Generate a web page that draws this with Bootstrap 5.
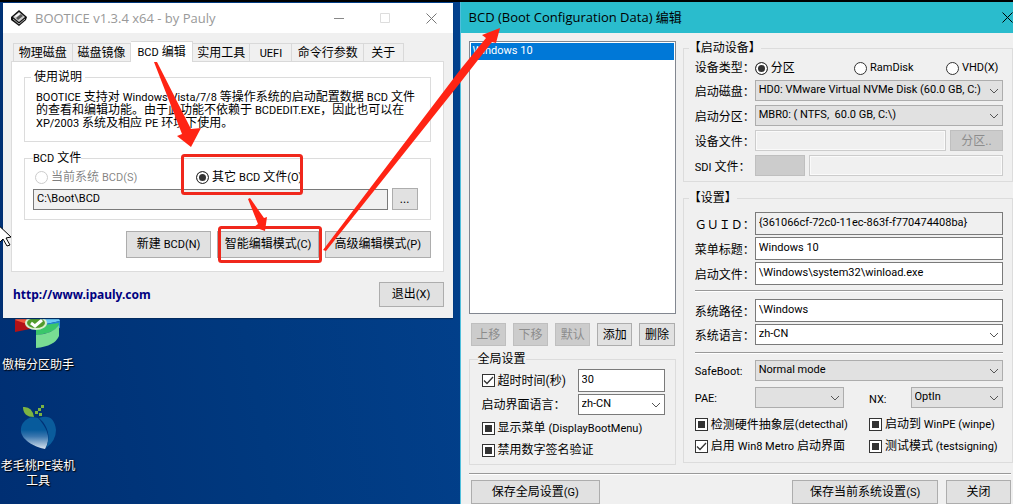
<!DOCTYPE html>
<html lang="zh-CN">
<head>
<meta charset="utf-8">
<meta name="viewport" content="width=device-width, initial-scale=1">
<title>BOOTICE</title>
<link href="https://cdn.jsdelivr.net/npm/bootstrap@5.3.0/dist/css/bootstrap.min.css" rel="stylesheet">
<style>
body{font:12px/16px Roboto,"Noto Sans CJK SC",sans-serif;color:#000;background:linear-gradient(80deg,#002f73,#00397f 25%,#034493 60%);border-top:2px solid #000;min-height:100vh;overflow:hidden}
.lat{font-size:11px}
.desktop-side{flex:460 1 0;min-width:0}
.tool-window{background:#f0f0f0;margin:1px 7px 0 3px;z-index:2;box-shadow:0 1px 1px #012b60}
.bcd-window{flex:553 1 0;min-width:0;background:#f0f0f0;border-left:1px solid #4fbfdc;height:calc(100vh - 2px)}
.title-bar{height:31px;font:13px/31px "Open Sans","Noto Sans CJK SC",sans-serif}
.title-light{background:#fff;color:#999;height:30px;line-height:30px}
.title-cyan{background:#2abccd}
.caption-btn{border:0;background:none;padding:0;display:flex}
.tab-strip{height:20px;margin:8px 10px 0}
.tabs-inner{width:91%}
.tab-strip button{border:1px solid #d9d9d9;border-left-width:0;background:#f0f0f0;color:#000;height:19px;padding:1px 0 0;flex:1 1 0;min-width:0;white-space:nowrap;line-height:17px}
.tab-strip button:first-child{border-left-width:1px}
.tab-strip .current{background:#fff;height:21px;border-bottom:0}
.tab-body{background:#fff;border:1px solid #dcdcdc;margin:0 9px 0 8px;padding:7px 12px 13px}
.intro{line-height:13px;padding:6px 0 0 11px;margin:0 0 3px;white-space:nowrap}
fieldset{border:1px solid #dcdcdc}
legend{font-size:12px;line-height:16px;margin:0 0 0 6px;padding:0 3px}
.source-row{padding:2px 0 2px 2px}
.group-file{padding:0 8px 9px}
.action-row{gap:6px;padding-top:11px}
.win-btn{border:1px solid #adadad;background:#e1e1e1;color:#000;font-size:12px;line-height:16px;padding:0 2px;height:27px;white-space:nowrap}
.win-btn:disabled{background:#ccc;border-color:#bfbfbf;color:#8c8c8c}
.btn-dots{height:22px;flex:0 0 26px}
.btn-exit{height:25px;width:65px}
.btn-part{height:21px;flex:0 0 53px}
.btn-sdi{height:21px;flex:0 0 50px}
.btn-save{height:24px}
.win-input,.win-select{border:1px solid #7a7a7a;background-color:#fff;height:23px;padding:0 3px 2px;font-size:11px;line-height:16px;color:#000;border-radius:0;min-width:0;width:100%;display:block}
.win-input[readonly]{background:#f0f0f0}
.win-input:disabled{border-color:#ccc;background:#f0f0f0;box-shadow:inset 0 0 0 1px #fafafa}
.win-select{height:21px;appearance:none;background-image:url("data:image/svg+xml,%3Csvg xmlns='http://www.w3.org/2000/svg' width='10' height='6'%3E%3Cpath d='M1 1l4 4 4-4' fill='none' stroke='%23555'/%3E%3C/svg%3E");background-repeat:no-repeat;background-position:right 3px center}
.select-grey{background-color:#e1e1e1;border-color:#adadad}
.tick{appearance:none;width:13px;height:13px;border:1px solid #333;background:#fff;margin:0 3px 0 0;flex:none}
.tick:checked{background:#fff url("data:image/svg+xml,%3Csvg xmlns='http://www.w3.org/2000/svg' width='11' height='11'%3E%3Cpath d='M1 5.5l3 3 6-6.500' fill='none' stroke='%23333' stroke-width='1.300'/%3E%3C/svg%3E")}
.tick:indeterminate{background:#333;box-shadow:inset 0 0 0 2px #fff}
.dot{appearance:none;width:13px;height:13px;border:1px solid #333;border-radius:50%;background:#fff;margin:0 3px 0 0;flex:none}
.dot:checked{background:#333;box-shadow:inset 0 0 0 2px #fff}
.dot:disabled{border-color:#ccc}
label{white-space:nowrap}
.win-input.file-input{height:21px}
.site-link{font:bold 12px/16px "Noto Sans",sans-serif;color:#000080;text-decoration:none}
.window-foot{padding:10px 9px 11px 10px}
.panes{padding:8px 0 0 8px;gap:7px}
.pane-list{flex:207 1 0;min-width:0}
.pane-form{flex:330 1 0;min-width:0}
.boot-list{border:1px solid #828790;background:#fff;padding:1px;height:273px;overflow:hidden;font-size:11px}
.boot-list div{background:#0078d7;color:#fff;height:17px;padding-left:2px}
.order-btns{padding:9px 1px 5px 2px;gap:7px}
.order-btns .win-btn{height:23px;flex:1 1 0}
.row-label{flex:0 0 60px;white-space:nowrap;padding-top:3px}
.form-line{display:flex;align-items:center}
.rule{border-top:1px solid #999;border-bottom:1px solid #fff}
.short-label{flex:0 0 96px}
.field-col{width:87px}
.stack-2{display:flex;flex-direction:column;gap:2px}
.group-global{padding:0 8px 6px}
.group-global .stack-2{padding:2px 0 0 4px}
.group-global .check-line{margin-top:3px}
.group-device{padding:0 9px 5px 11px;margin-top:-1px}
.group-setup{padding:6px 9px 7px 11px;margin-top:8px}
.group-device legend,.group-setup legend{margin-left:-6px;padding:0}
.flags{display:grid;grid-template-columns:174fr 134fr;row-gap:5px;padding-top:8px}
.desk-icon{position:absolute;width:78px;left:-1px;text-align:center;color:#fff;text-shadow:1px 1px 1px #000,0 0 2px #001}
.desk-icon svg{display:block;margin:0 auto}
.marks{position:absolute;left:0;top:0;z-index:5;pointer-events:none}
</style>
</head>
<body>
<div class="d-flex align-items-stretch">
  <section class="desktop-side position-relative">
    <div class="tool-window position-relative">
      <header class="title-bar title-light d-flex align-items-center">
        <svg class="ms-2" width="16" height="16" viewBox="0 0 16 16"><path d="M0 7L8 0l8 7-1 3-7 6-8-6z" fill="#111"/><path d="M2 7l6-5 6 5-6 5z" fill="#ccc"/><path d="M5 8l5-4 2 2-5 4z" fill="#555"/><path d="M4 6l4-3 1 1-4 3z" fill="#fff"/><path d="M2 9l6 5 6-5" fill="none" stroke="#aaa"/></svg>
        <span class="flex-grow-1 ps-1 ms-1">BOOTICE v1.3.4 x64 - by Pauly</span>
        <div class="d-flex align-items-center gap-4 pe-3">
          <button class="caption-btn me-2" aria-label="最小化"><svg width="10" height="10"><path d="M0 5.500h10" stroke="#888"/></svg></button>
          <button class="caption-btn me-2 ms-1" aria-label="最大化"><svg width="10" height="10"><path d="M.5.5h9v9h-9z" fill="none" stroke="#ddd"/></svg></button>
          <button class="caption-btn ms-1" aria-label="关闭"><svg width="11" height="11"><path d="M.5.5l10 10M10.500.5l-10 10" stroke="#777"/></svg></button>
        </div>
      </header>
      <div class="tab-strip" role="tablist">
        <div class="tabs-inner d-flex align-items-end">
          <button role="tab" style="flex-grow:59">物理磁盘</button><button role="tab" style="flex-grow:59">磁盘镜像</button><button role="tab" class="current" style="flex-grow:62"><span class="lat">BCD</span> 编辑</button><button role="tab" style="flex-grow:58">实用工具</button><button role="tab" style="flex-grow:42"><span class="lat">UEFI</span></button><button role="tab" style="flex-grow:72">命令行参数</button><button role="tab" style="flex-grow:40">关于</button>
        </div>
      </div>
      <main class="tab-body">
        <fieldset class="pb-2">
          <legend class="float-none w-auto">使用说明</legend>
          <p class="intro"><span class="lat">BOOTICE</span> 支持对 <span class="lat">Windows Vista/7/8</span> 等操作系统的启动配置数据 <span class="lat">BCD</span> 文件<br>的查看和编辑功能。由于此功能不依赖于 <span class="lat">BCDEDIT.EXE</span>，因此也可以在<br><span class="lat">XP/2003</span> 系统及相应 <span class="lat">PE</span> 环境下使用。</p>
        </fieldset>
        <fieldset class="group-file mt-2">
          <legend class="float-none w-auto ms-0 px-0"><span class="lat">BCD</span> 文件</legend>
          <div class="source-row row gx-0">
            <label class="col-5 d-flex align-items-center text-black-50"><input class="dot" type="radio" name="src" disabled><span>当前系统 <span class="lat">BCD(S)</span></span></label>
            <label class="col-5 d-flex align-items-center"><input class="dot" type="radio" name="src" checked><span>其它 <span class="lat">BCD</span> 文件<span class="lat">(O)</span></span></label>
          </div>
          <div class="d-flex gap-1 align-items-center pe-1">
            <input class="win-input file-input" aria-label="BCD 文件" value="C:\Boot\BCD" readonly>
            <button class="win-btn btn-dots">...</button>
          </div>
        </fieldset>
        <div class="action-row d-flex justify-content-end">
          <button class="win-btn" style="width:21%">新建 <span class="lat">BCD(N)</span></button>
          <button class="win-btn" style="width:25%">智能编辑模式<span class="lat">(C)</span></button>
          <button class="win-btn" style="width:26%">高级编辑模式<span class="lat">(P)</span></button>
        </div>
      </main>
      <footer class="window-foot d-flex justify-content-between align-items-center">
        <a class="site-link" href="http://www.ipauly.com">http://www.ipauly.com</a>
        <button class="win-btn btn-exit">退出<span class="lat">(X)</span></button>
      </footer>
    </div>
    <div class="desk-icon" style="top:309px">
      <svg width="46" height="38" viewBox="0 0 46 38"><path d="M0 9v12l20-4V8z" fill="#b31217"/><path d="M0 9Q4 0 20 0v9l-5 5z" fill="#f1583d"/><path d="M22 0q19 0 23 10l-23 5z" fill="#69c8f5"/><path d="M45 10v7L22 24v-9z" fill="#2387d5"/><path d="M21 15l23-3q-2 10-23 12z" fill="#3ac66a"/><path d="M21 24q17-1 23-10v11q-4 10-23 12z" fill="#79dc93"/><ellipse cx="21" cy="12" rx="10" ry="6" fill="#519b2c" stroke="#d9efcf" stroke-width="2"/><path d="M16 12l4 3 7-6" fill="none" stroke="#fff" stroke-width="3"/></svg>
      <div class="mt-2">傲梅分区助手</div>
    </div>
    <div class="desk-icon" style="top:402px">
      <svg width="38" height="47" viewBox="0 0 38 47"><defs><linearGradient id="peach" x1="0" y1="0" x2="0" y2="1"><stop offset=".4" stop-color="#075b9c"/><stop offset=".6" stop-color="#3a76ae"/><stop offset="1" stop-color="#d8e3ee"/></linearGradient></defs><path d="M4 3q9-1 11 10Q4 13 4 3z" fill="#7cb342"/><path d="M22 1h3v3h-3zM19 4h3v3h-3zM16 7h3v3h-3zM20 9h3v3h-3z" fill="#7cb342"/><path d="M19 14q-9-3-15 5c-8 13 8 23 22 26 7-12 1-22-7-31z" fill="url(#peach)"/><path d="M20 14q15-5 17 12 0 11-10 18 6-14-3-26z" fill="#0a5c9c"/></svg>
      <div class="mt-2" style="line-height:15px">老毛桃PE装机<br>工具</div>
    </div>
  </section>

  <section class="bcd-window">
    <header class="title-bar title-cyan d-flex align-items-center justify-content-between">
      <span class="ps-2">BCD (Boot Configuration Data) 编辑</span>
      <button class="caption-btn" aria-label="关闭"><svg width="11" height="11"><path d="M.5.5l10 10M10.500.5l-10 10" stroke="#000"/></svg></button>
    </header>
    <div class="panes d-flex">
      <div class="pane-list">
        <div class="boot-list" role="listbox"><div role="option" aria-selected="true">Windows 10</div></div>
        <div class="order-btns d-flex">
          <button class="win-btn" disabled>上移</button><button class="win-btn" disabled>下移</button><button class="win-btn" disabled>默认</button><button class="win-btn">添加</button><button class="win-btn">删除</button>
        </div>
        <fieldset class="group-global">
          <legend class="float-none w-auto ms-0 px-0">全局设置</legend>
          <div class="stack-2">
            <div class="form-line"><label class="short-label d-flex align-items-center"><input class="tick" type="checkbox" checked>超时时间(秒)</label><input class="win-input field-col" aria-label="秒" value="30"></div>
            <div class="form-line"><label class="short-label" for="ui-lang">启动界面语言：</label><select id="ui-lang" class="win-select field-col"><option>zh-CN</option></select></div>
            <label class="check-line d-flex align-items-center"><input class="tick" type="checkbox" data-mixed><span>显示菜单 <span class="lat">(DisplayBootMenu)</span></span></label>
            <label class="check-line d-flex align-items-center"><input class="tick" type="checkbox" data-mixed>禁用数字签名验证</label>
          </div>
        </fieldset>
      </div>
      <div class="pane-form">
        <fieldset class="group-device">
          <legend class="float-none w-auto">【启动设备】</legend>
          <div class="d-flex flex-column gap-1">
            <div class="form-line pt-1"><span class="row-label pt-0">设备类型：</span>
              <div class="d-flex flex-grow-1">
                <label class="d-flex align-items-center" style="width:40%"><input class="dot" type="radio" name="dev" checked>分区</label>
                <label class="d-flex align-items-center lat" style="width:37%"><input class="dot" type="radio" name="dev">RamDisk</label>
                <label class="d-flex align-items-center lat"><input class="dot" type="radio" name="dev">VHD(X)</label>
              </div></div>
            <div class="form-line"><label class="row-label" for="disk">启动磁盘：</label><select id="disk" class="win-select select-grey"><option>HD0: VMware Virtual NVMe Disk (60.0 GB, C:)</option></select></div>
            <div class="form-line"><label class="row-label" for="part">启动分区：</label><select id="part" class="win-select select-grey"><option>MBR0: ( NTFS,&nbsp; 60.0 GB, C:\)</option></select></div>
            <div class="form-line"><label class="row-label" for="dfile">设备文件：</label><input id="dfile" class="win-input file-input me-1" disabled><button class="win-btn btn-part" disabled>分区..</button></div>
            <div class="form-line"><label class="row-label" for="sdi"><span class="lat">SDI</span> 文件：</label><button class="win-btn btn-sdi me-1" disabled aria-label="SDI"></button><input id="sdi" class="win-input file-input" disabled></div>
          </div>
        </fieldset>
        <fieldset class="group-setup">
          <legend class="float-none w-auto">【设置】</legend>
          <div class="stack-2">
            <div class="form-line"><label class="row-label" for="guid">ＧＵＩＤ：</label><input id="guid" class="win-input" readonly value="{361066cf-72c0-11ec-863f-f770474408ba}"></div>
            <div class="form-line"><label class="row-label" for="name">菜单标题：</label><input id="name" class="win-input" value="Windows 10"></div>
            <div class="form-line"><label class="row-label" for="bfile">启动文件：</label><input id="bfile" class="win-input" value="\Windows\system32\winload.exe"></div>
          </div>
          <div class="rule" style="margin:5px 0 7px"></div>
          <div class="stack-2">
            <div class="form-line"><label class="row-label" for="path">系统路径：</label><input id="path" class="win-input" value="\Windows"></div>
            <div class="form-line"><label class="row-label" for="lang">系统语言：</label><select id="lang" class="win-select"><option>zh-CN</option></select></div>
          </div>
          <div class="rule" style="margin:7px 0 6px"></div>
          <div class="form-line"><label class="row-label lat" for="safe">SafeBoot:</label><select id="safe" class="win-select select-grey"><option>Normal mode</option></select></div>
          <div class="form-line" style="margin-top:6px"><label class="row-label lat" for="pae">PAE:</label><select id="pae" class="win-select select-grey flex-shrink-0" style="width:29%"><option></option></select><label class="lat ms-auto pe-4 pt-1" for="nx">NX:</label><select id="nx" class="win-select select-grey flex-shrink-0" style="width:30%"><option>OptIn</option></select></div>
          <div class="flags">
            <label class="d-flex align-items-center"><input class="tick" type="checkbox" data-mixed>检测硬件抽象层<span class="lat">(detecthal)</span></label>
            <label class="d-flex align-items-center"><input class="tick" type="checkbox" data-mixed><span>启动到 <span class="lat">WinPE (winpe)</span></span></label>
            <label class="d-flex align-items-center"><input class="tick" type="checkbox" checked><span>启用 <span class="lat">Win8 Metro</span> 启动界面</span></label>
            <label class="d-flex align-items-center"><input class="tick" type="checkbox" data-mixed><span>测试模式 <span class="lat">(testsigning)</span></span></label>
          </div>
        </fieldset>
      </div>
    </div>
    <div class="rule" style="margin:8px 2px 5px 8px"></div>
    <footer class="d-flex gap-2" style="padding:0 2px 0 10px">
      <button class="win-btn btn-save" style="width:24%">保存全局设置<span class="lat">(G)</span></button>
      <button class="win-btn btn-save ms-auto" style="width:27%">保存当前系统设置<span class="lat">(S)</span></button>
      <button class="win-btn btn-save" style="width:12%">关闭</button>
    </footer>
  </section>
</div>

<svg class="marks" width="1013" height="504" aria-hidden="true">
  <g fill="none" stroke="#f0281c" stroke-width="3"><rect x="182.500" y="155.500" width="119" height="38" rx="2"/><rect x="219.500" y="227.500" width="101" height="34" rx="2"/></g>
  <g fill="#ff2414"><path d="M154 62L157 62 191 129 201 128 191 147 177 136 182 134z"/><path d="M248 199l2-1 14 20 3-1-2 14-11-4 4-3z"/><path d="M323 250L460 70 486 38 482 35 500 28 496 43 492 42 460 83 326 251z"/></g>
  <path d="M-6 221L11 237l-5 1 4 7-3 1-4-7-4 4z" fill="#fff" stroke="#000"/>
</svg>
<script src="https://cdn.jsdelivr.net/npm/bootstrap@5.3.0/dist/js/bootstrap.bundle.min.js"></script>
<script>document.querySelectorAll('[data-mixed]').forEach(function(box){box.indeterminate=true;});</script>
</body>
</html>
